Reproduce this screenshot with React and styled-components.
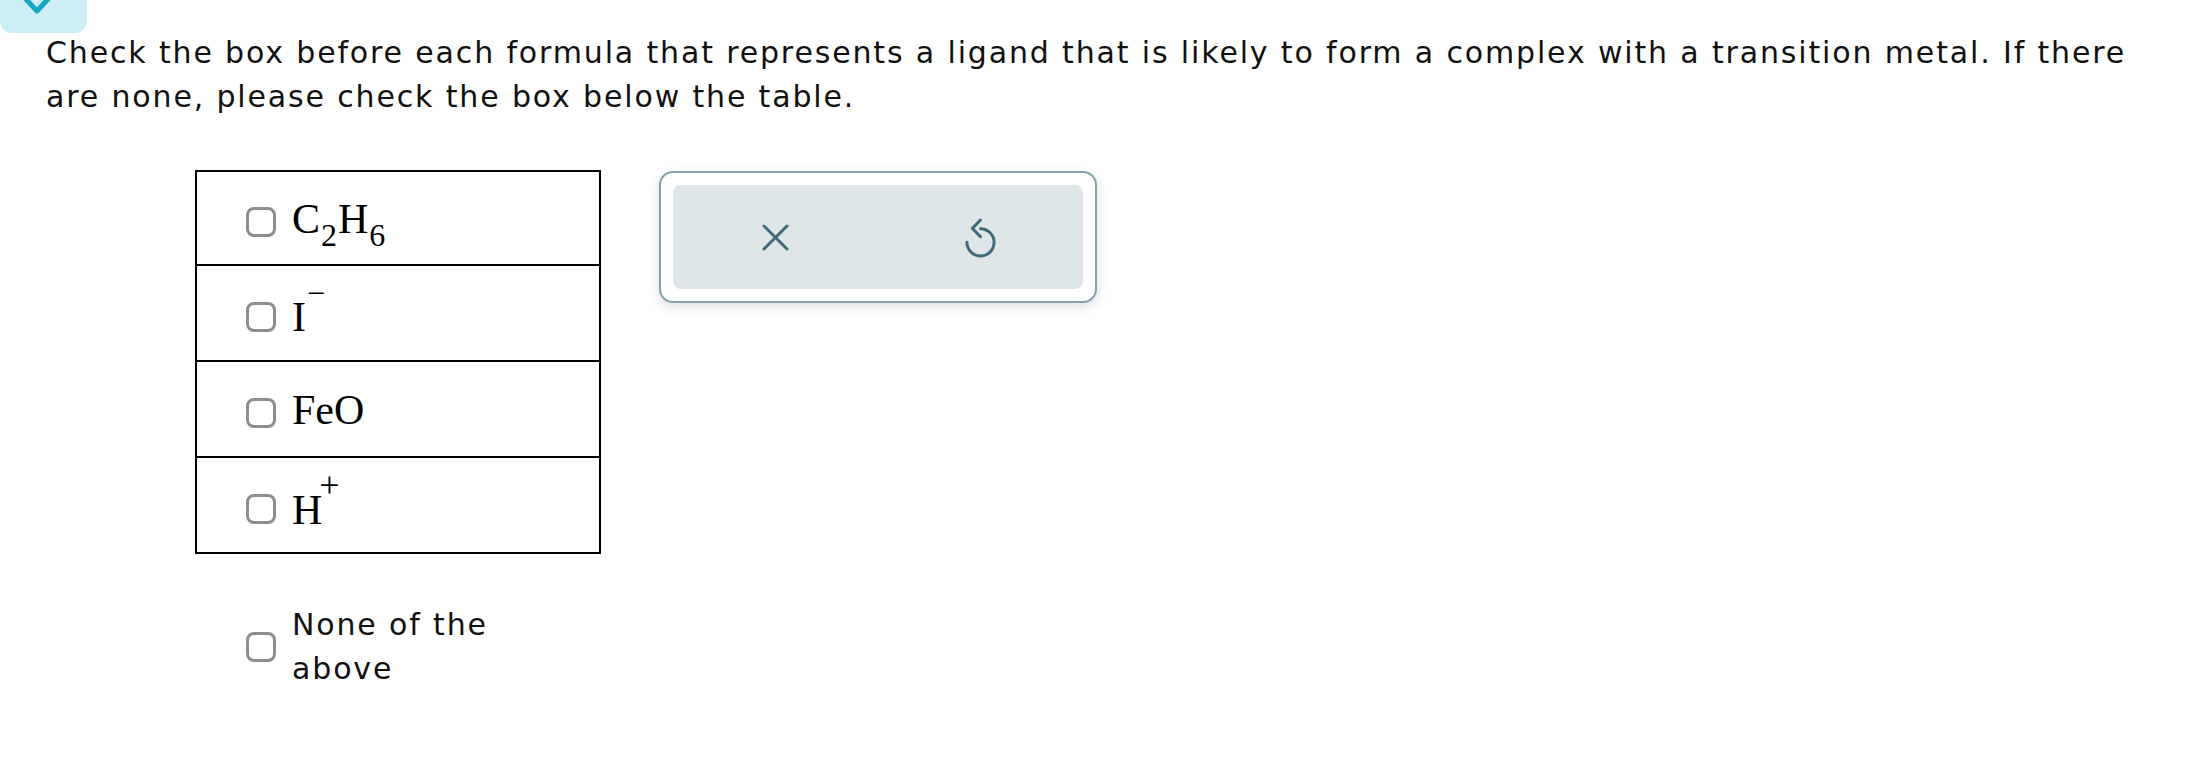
import React from "react";
import styled, { createGlobalStyle } from "styled-components";

const Global = createGlobalStyle`
  html, body { margin: 0; padding: 0; background: #ffffff; }
  body { font-family: "DejaVu Sans", Verdana, sans-serif; color: #111111; }
`;

const Page = styled.div`
  width: 2201px;
  min-height: 777px;
`;

const Tab = styled.div`
  width: 87px;
  height: 33px;
  background: #cdeef4;
  border-radius: 0 0 12px 12px;
  svg { display: block; }
`;

const Prompt = styled.p`
  margin: -2px 0 0;
  padding-left: 46px;
  max-width: 2110px;
  font-size: 30px;
  letter-spacing: 1.85px;
  line-height: 44px;
  color: #111111;
`;

const Main = styled.div`
  display: flex;
  align-items: flex-start;
  gap: 58px;
  margin-top: 51px;
  padding-left: 195px;
`;

const Column = styled.div`
  display: flex;
  flex-direction: column;
`;

const Grid = styled.div`
  width: 406px;
  box-sizing: border-box;
  border: 2px solid #000000;
`;

const Row = styled.div`
  display: flex;
  align-items: center;
  box-sizing: border-box;
  height: 92px;
  padding: 7px 0 0 49px;
  & + & { border-top: 2px solid #000000; height: 96px; }
`;

const Box = styled.span`
  display: block;
  flex-shrink: 0;
  width: 30px;
  height: 30px;
  box-sizing: border-box;
  border: 3px solid #8d8d8d;
  border-radius: 8px;
  background: #ffffff;
  margin-right: 16px;
`;

const Formula = styled.span`
  display: inline-block;
  height: 42px;
  margin-top: -6px;
  font-family: "Liberation Serif", "Times New Roman", serif;
  font-size: 42px;
  line-height: 42px;
  color: #000000;
  white-space: nowrap;
`;

const Sub = styled.span`
  font-size: 32px;
  line-height: 0;
  vertical-align: -13px;
  margin: 0 1px 0 1px;
`;

const Sup = styled.span`
  font-size: ${(p) => p.$size || 32}px;
  line-height: 0;
  vertical-align: 27px;
  margin-left: ${(p) => p.$shift || 0}px;
`;

const NoneOption = styled.div`
  display: flex;
  align-items: center;
  margin-top: 49px;
  padding-left: 51px;
`;

const NoneLabel = styled.span`
  font-size: 30px;
  letter-spacing: 1.85px;
  line-height: 44px;
  max-width: 225px;
  color: #111111;
`;

const Panel = styled.div`
  margin-top: 1px;
  width: 438px;
  height: 132px;
  box-sizing: border-box;
  border: 2px solid #84a2ac;
  border-radius: 14px;
  padding: 12px;
  background: #ffffff;
  box-shadow: 0 4px 12px rgba(0, 0, 0, 0.13);
`;

const Tray = styled.div`
  display: flex;
  height: 100%;
  background: #dfe6e8;
  border-radius: 8px;
`;

const ActionButton = styled.button`
  flex: 1;
  display: flex;
  align-items: center;
  justify-content: center;
  border: none;
  background: transparent;
  padding: 0;
  cursor: pointer;
  color: #3e6a79;
  svg { display: block; }
`;

const CloseIcon = () => (
  <svg width="27" height="27" viewBox="0 0 27 27" fill="none" stroke="currentColor" strokeWidth="3" strokeLinecap="round">
    <line x1="2" y1="2" x2="25" y2="25" />
    <line x1="25" y1="2" x2="2" y2="25" />
  </svg>
);

const UndoIcon = () => (
  <svg width="33" height="41" viewBox="3.5 0.5 17 21" fill="none" stroke="currentColor" strokeWidth="1.55" strokeLinecap="round" strokeLinejoin="round">
    <path d="M5 13.5 A7 7 0 1 0 12 6.5" />
    <path d="M12 2 L7.8 6.3 L12 10.6" />
  </svg>
);

const options = [
  { key: "c2h6", body: (<>C<Sub>2</Sub>H<Sub>6</Sub></>) },
  { key: "i", body: (<>I<Sup $shift={1}>−</Sup></>) },
  { key: "feo", body: (<>FeO</>) },
  { key: "h", body: (<>H<Sup $shift={-3} $size={36}>+</Sup></>) },
];

export default function App() {
  return (
    <Page>
      <Global />
      <Tab>
        <svg width="87" height="33" viewBox="0 0 87 33">
          <polyline points="24,-3 37,11 50,-3" fill="none" stroke="#17a6c3" strokeWidth="5" strokeLinecap="round" strokeLinejoin="round" />
        </svg>
      </Tab>
      <Prompt>
        Check the box before each formula that represents a ligand that is likely to form a complex with a transition metal. If there are none, please check the box below the table.
      </Prompt>
      <Main>
        <Column>
          <Grid>
            {options.map((o) => (
              <Row key={o.key}>
                <Box />
                <Formula>{o.body}</Formula>
              </Row>
            ))}
          </Grid>
          <NoneOption>
            <Box />
            <NoneLabel>None of the above</NoneLabel>
          </NoneOption>
        </Column>
        <Panel>
          <Tray>
            <ActionButton aria-label="Clear"><CloseIcon /></ActionButton>
            <ActionButton aria-label="Undo"><UndoIcon /></ActionButton>
          </Tray>
        </Panel>
      </Main>
    </Page>
  );
}
